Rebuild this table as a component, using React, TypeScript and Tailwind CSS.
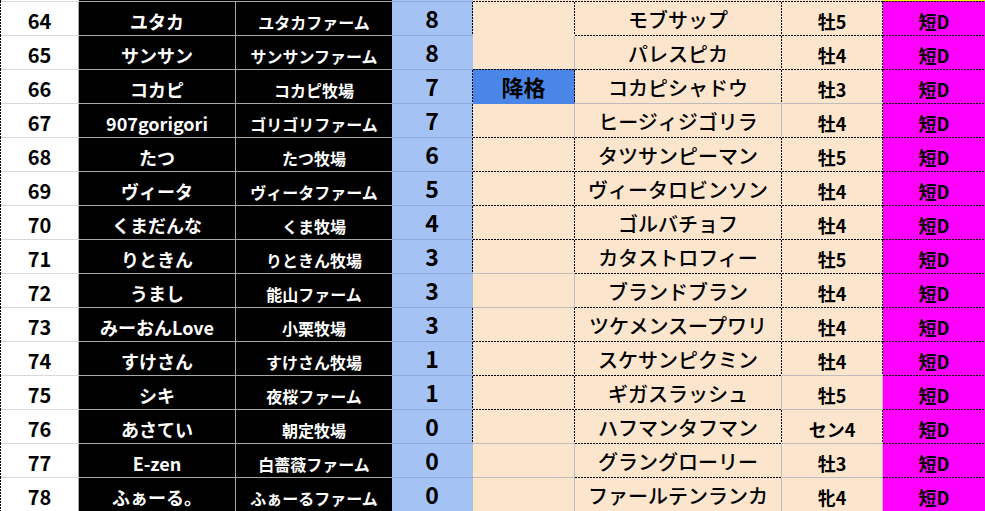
import React from "react";

type Row = [number, string, string, number, string, string, string, string];

const rows: Row[] = [
  [64, "ユタカ", "ユタカファーム", 8, "", "モブサップ", "牡5", "短D"],
  [65, "サンサン", "サンサンファーム", 8, "", "パレスピカ", "牡4", "短D"],
  [66, "コカピ", "コカピ牧場", 7, "降格", "コカピシャドウ", "牡3", "短D"],
  [67, "907gorigori", "ゴリゴリファーム", 7, "", "ヒージィジゴリラ", "牡4", "短D"],
  [68, "たつ", "たつ牧場", 6, "", "タツサンピーマン", "牡5", "短D"],
  [69, "ヴィータ", "ヴィータファーム", 5, "", "ヴィータロビンソン", "牡4", "短D"],
  [70, "くまだんな", "くま牧場", 4, "", "ゴルバチョフ", "牡4", "短D"],
  [71, "りときん", "りときん牧場", 3, "", "カタストロフィー", "牡5", "短D"],
  [72, "うまし", "能山ファーム", 3, "", "ブランドブラン", "牡4", "短D"],
  [73, "みーおんLove", "小栗牧場", 3, "", "ツケメンスープワリ", "牡4", "短D"],
  [74, "すけさん", "すけさん牧場", 1, "", "スケサンピクミン", "牡4", "短D"],
  [75, "シキ", "夜桜ファーム", 1, "", "ギガスラッシュ", "牡5", "短D"],
  [76, "あさてい", "朝定牧場", 0, "", "ハフマンタフマン", "セン4", "短D"],
  [77, "E-zen", "白薔薇ファーム", 0, "", "グラングローリー", "牡3", "短D"],
  [78, "ふぁーる。", "ふぁーるファーム", 0, "", "ファールテンランカ", "牝4", "短D"],
];

// top lines for cols 4..7
const tops = [
  "dddd", "nddd", "dddd", "bggd", "dddd", "dddd", "dddd", "dddd",
  "gddd", "gddd", "dddd", "ddgd", "ddgd", "gdgd", "gdgd",
];
// right lines for cols 3..6
const rights = [
  "dddd", "ngdd", "dddd", "dggd", "dddd", "dddd", "dddd", "dddd",
  "ggdd", "dddd", "dddd", "ddgg", "dddd", "gggg", "gggg",
];

const H_DOT = "bg-[image:repeating-linear-gradient(90deg,#000_0_2px,transparent_2px_3px)]";
const V_DOT = "bg-[image:repeating-linear-gradient(180deg,#000_0_2px,transparent_2px_3px)]";

const topCls: Record<string, string> = {
  d: H_DOT,
  g: "bg-[#bdbdbd]",
  n: "bg-transparent",
  b: "bg-[#4a86e8]",
};
const rightCls: Record<string, string> = {
  d: V_DOT,
  g: "bg-[#bdbdbd]",
  n: "bg-transparent",
};

function Cell({
  w,
  bg,
  top,
  right,
  left,
  className,
  children,
}: {
  w: string;
  bg: string;
  top: string;
  right?: string;
  left?: string;
  className: string;
  children?: React.ReactNode;
}) {
  return (
    <div className={`flex shrink-0 ${w} ${bg}`}>
      {left && <div className={`w-px shrink-0 ${left}`} />}
      <div className="flex flex-col flex-1 min-w-0">
        <div className={`h-px shrink-0 ${top}`} />
        <div className="flex flex-1 min-h-0">
          <div className={`flex-1 flex items-center justify-center leading-none whitespace-nowrap ${className}`}>
            {children}
          </div>
          {right && <div className={`w-px shrink-0 ${right}`} />}
        </div>
      </div>
    </div>
  );
}

const font = "font-['Noto_Sans_CJK_JP','Noto_Sans',sans-serif]";

export default function App() {
  return (
    <div className={`w-[985px] h-[511px] overflow-hidden bg-white ${font}`}>
      <div className="flex h-px">
        <div className={`w-[79px] bg-white`}>
          <div className="w-px h-px bg-black" />
        </div>
        <div className="w-[157px] bg-black" />
        <div className="w-[156px] bg-black" />
        <div className="w-[81px] bg-[#a4c2f4]" />
        <div className="w-[102px] bg-[#fce5cd]" />
        <div className="w-[207px] bg-[#fce5cd]" />
        <div className="w-[101px] bg-[#fce5cd]" />
        <div className="w-[102px] bg-[#ffff00]" />
      </div>
      {rows.map((r, i) => {
        const t = tops[i];
        const rr = rights[i];
        const isDemote = r[4] !== "";
        return (
          <div key={r[0]} className="flex h-[34px]">
            <Cell
              w="w-[79px]"
              bg="bg-white"
              left={V_DOT}
              top="bg-[#d9d9d9]"
              right="bg-[#a6a6a6]"
              className="pt-[4px] text-[20px] font-bold text-black"
            >
              {r[0]}
            </Cell>
            <Cell
              w="w-[157px]"
              bg="bg-black"
              top="bg-[#a6a6a6]"
              right="bg-[#a6a6a6]"
              className="pt-[4px] text-[18px] font-bold text-white"
            >
              {r[1]}
            </Cell>
            <Cell
              w="w-[156px]"
              bg="bg-black"
              top="bg-[#a6a6a6]"
              className="pt-[7px] text-[16px] font-bold text-white"
            >
              {r[2]}
            </Cell>
            <Cell
              w="w-[81px]"
              bg="bg-[#a4c2f4]"
              top="bg-[#8faadc]"
              right={rightCls[rr[0]]}
              className="pb-[1px] text-[23px] font-bold text-black"
            >
              {r[3]}
            </Cell>
            <Cell
              w="w-[102px]"
              bg={isDemote ? "bg-[#4a86e8]" : "bg-[#fce5cd]"}
              top={topCls[t[0]]}
              right={rightCls[rr[1]]}
              className="pb-[1px] text-[22px] font-bold text-black"
            >
              {r[4]}
            </Cell>
            <Cell
              w="w-[207px]"
              bg="bg-[#fce5cd]"
              top={topCls[t[1]]}
              right={rightCls[rr[2]]}
              className="pt-[2px] text-[20px] font-medium text-black"
            >
              {r[5]}
            </Cell>
            <Cell
              w="w-[101px]"
              bg="bg-[#fce5cd]"
              top={topCls[t[2]]}
              right={rightCls[rr[3]]}
              className="pt-[5px] text-[18px] font-bold text-black"
            >
              {r[6]}
            </Cell>
            <Cell
              w="w-[102px]"
              bg="bg-[#ff00ff]"
              top={topCls[t[3]]}
              className="pt-[5px] text-[18px] font-bold text-black"
            >
              {r[7]}
            </Cell>
          </div>
        );
      })}
    </div>
  );
}
